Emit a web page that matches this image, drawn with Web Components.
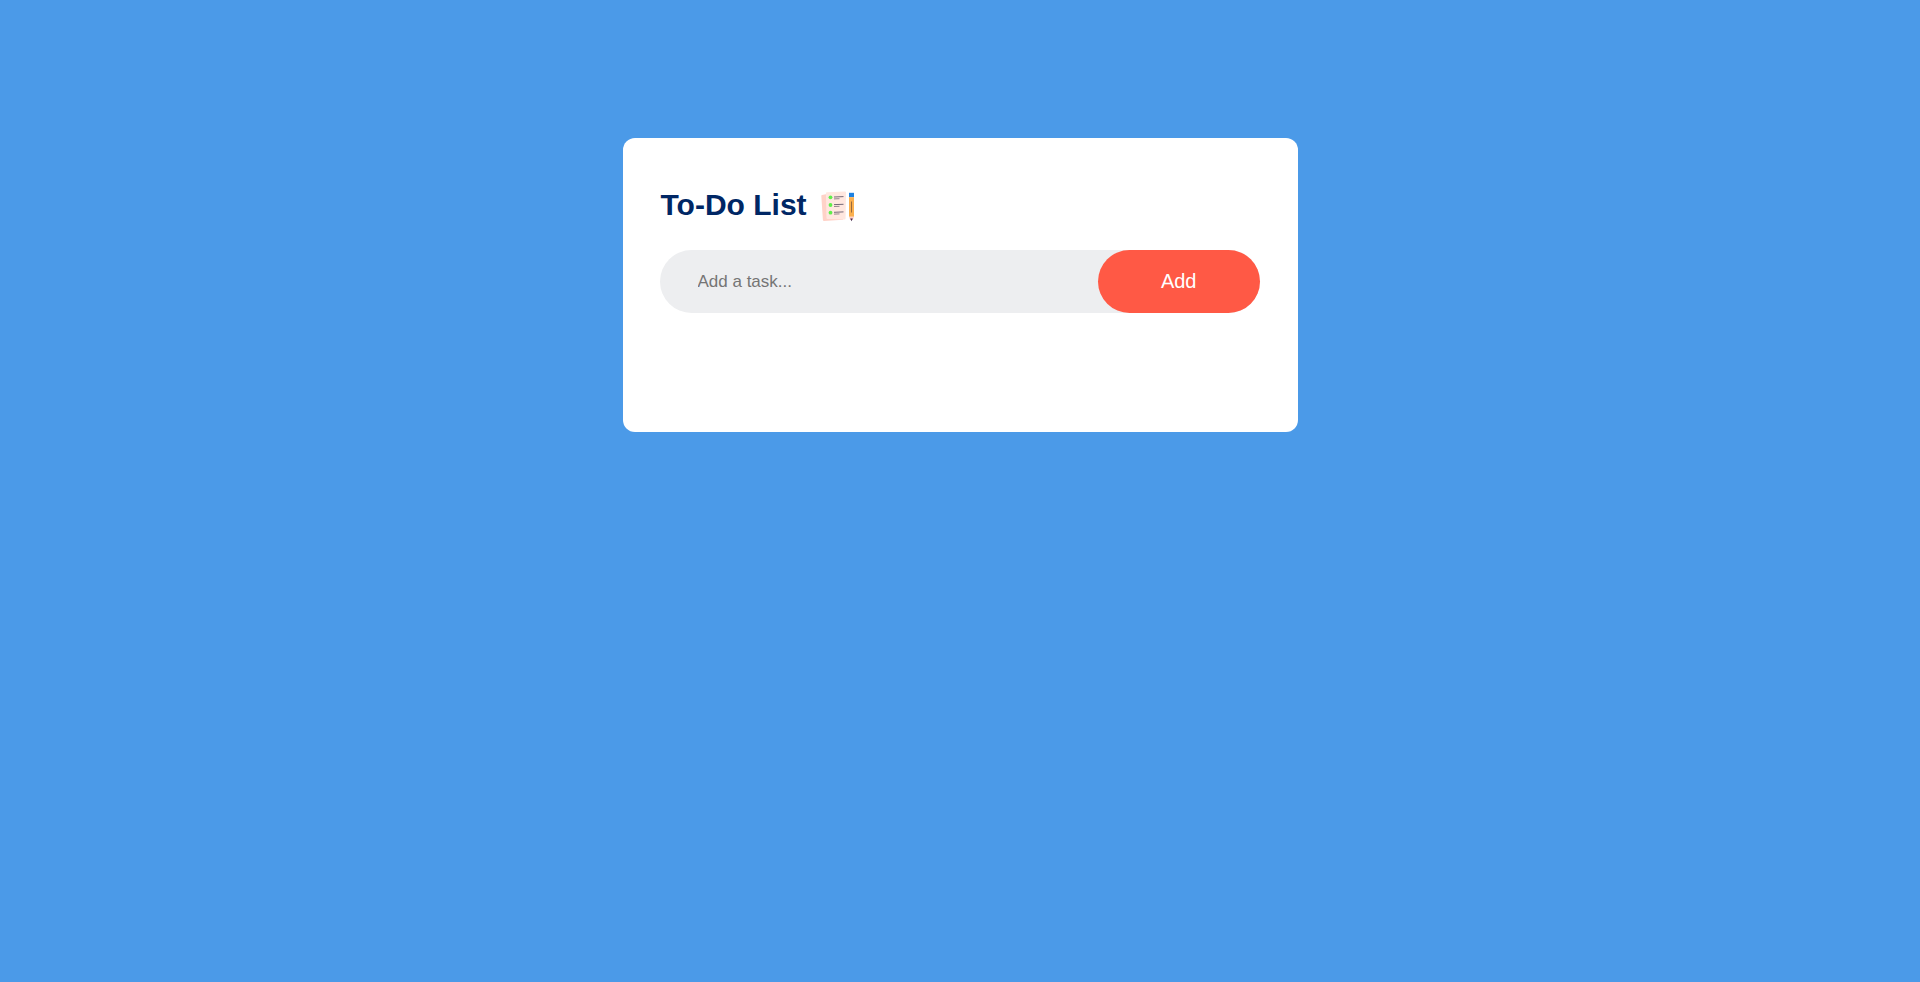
<!DOCTYPE html>
<html lang="en">
<head>
<meta charset="utf-8">
<meta name="viewport" content="width=device-width, initial-scale=1">
<title>To-Do List</title>
<style>
*{box-sizing:border-box}
html{background:#4b9ae8}
body{margin:0;padding:0 16px;font-family:"Liberation Sans",Arial,sans-serif}
</style>
</head>
<body>
<todo-card><todo-heading slot="title">To-Do List</todo-heading><todo-form></todo-form></todo-card>
<script>
class TodoCard extends HTMLElement{
  constructor(){
    super();
    this.attachShadow({mode:'open'}).innerHTML=`
<style>
:host{display:block;max-width:675px;margin:138px auto 24px;padding:50px 38px 88px 37px;background:#fff;border-radius:12px;box-sizing:border-box}
ul{list-style:none;margin:31px 0 0;padding:0}
main{display:grid;gap:26px}
</style>
<main><slot name="title"></slot><slot></slot></main>
<ul aria-label="Tasks"></ul>`;
    this.addEventListener('add-task',e=>{
      const li=document.createElement('li');
      li.textContent=e.detail;
      this.shadowRoot.querySelector('ul').append(li);
    });
  }
}
class TodoIcon extends HTMLElement{
  constructor(){
    super();
    this.attachShadow({mode:'open'}).innerHTML=`
<style>:host{display:block;width:38px;height:36px}svg{display:block}</style>
<svg width="38" height="36" viewBox="0 0 38 36" aria-hidden="true">
<path d="M3 7L8 6L25 29L24 31.800L5 33Q4 33 3.900 32L2.300 8Q2.300 7 3 7Z" fill="#ffd2c8"/>
<path d="M8 4.200L26 3.600Q27 3.600 27 4.600L26.600 30.500Q26.600 31.400 25.600 31.400L8.500 30.900Q7.500 30.900 7.500 29.900L6.900 5.300Q6.900 4.200 8 4.200Z" fill="#ffe7df"/>
<g fill="#5fee4b"><circle cx="11.500" cy="9.300" r="1.900"/><circle cx="11.500" cy="17" r="1.900"/><circle cx="11.500" cy="24.700" r="1.900"/></g>
<g fill="none" stroke="#655a6c"><path d="M15 9L24.500 8.600M15 16.600L24.500 16.300M15 24.300L24.500 23.900" stroke-width=".9"/><path d="M15 10.900L20.500 10.700M15 18.500L20.500 18.300M15 26.100L20.500 25.900" stroke-width=".7"/></g>
<path d="M30 4.800h5v4.400h-5z" fill="#1d82e2"/>
<path d="M30 9.200h5v19.600h-5z" fill="#fbb04f"/>
<path d="M32 13.500h1v11h-1z" fill="#96693f"/>
<path d="M30 28.800h5L33.800 32h-2.600z" fill="#ffcfc8"/>
<path d="M31.200 30.600h2.600L32.500 33.300Z" fill="#452a4c"/>
</svg>`;
  }
}
class TodoHeading extends HTMLElement{
  constructor(){
    super();
    this.attachShadow({mode:'open'}).innerHTML=`
<style>
:host{display:flex;align-items:flex-start;gap:12px;padding-left:1px;height:36px}
h1{margin:0;font-size:30px;line-height:34px;font-weight:700;color:#002765}
</style><h1><slot></slot></h1><todo-icon></todo-icon>`;
  }
}
class TodoForm extends HTMLElement{
  constructor(){
    super();
    this.attachShadow({mode:'open'}).innerHTML=`
<style>
:host{display:block}
form{display:flex;background:#edeef0;border-radius:32px;height:63px}
input{flex:1;min-width:0;border:0;outline:0;background:transparent;padding:0 0 0 38px;font:17px/24px "Liberation Sans",Arial,sans-serif;color:#222}
input::placeholder{color:#757575;opacity:1}
button{flex:none;border:0;padding:0 63px 2px;border-radius:32px;background:#ff5945;color:#fff;font:20px/24px "Liberation Sans",Arial,sans-serif;cursor:pointer}
</style>
<form><input type="text" aria-label="Task" placeholder="Add a task..." autocomplete="off"><button type="submit">Add</button></form>`;
    this.shadowRoot.querySelector('form').addEventListener('submit',e=>{
      e.preventDefault();
      const input=this.shadowRoot.querySelector('input');
      const text=input.value.trim();
      if(text)this.dispatchEvent(new CustomEvent('add-task',{bubbles:true,detail:text}));
      input.value='';
    });
  }
}
customElements.define('todo-icon',TodoIcon);
customElements.define('todo-heading',TodoHeading);
customElements.define('todo-form',TodoForm);
customElements.define('todo-card',TodoCard);
</script>
</body>
</html>
